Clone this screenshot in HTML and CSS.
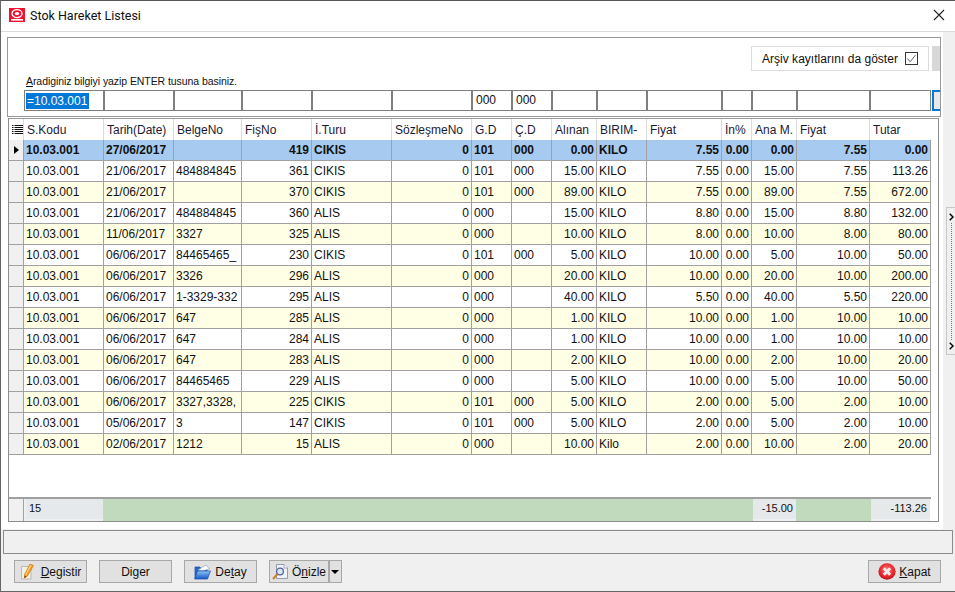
FILE: index.html
```html
<!DOCTYPE html>
<html lang="tr">
<head>
  <meta charset="UTF-8" />
  <title>Stok Hareket Listesi</title>
  <link rel="stylesheet" href="styles.css">
</head>
<body>
<div class="window">

  <div class="titlebar">
    <svg class="logo" width="16" height="14" viewBox="0 0 16 14">
      <rect width="16" height="14" fill="#f01030"/>
      <ellipse cx="8" cy="5.6" rx="5" ry="4" fill="none" stroke="#fff" stroke-width="1.4"/>
      <ellipse cx="8" cy="5.6" rx="2.2" ry="1.7" fill="#fff"/>
      <rect x="2" y="11" width="12" height="1.6" fill="#fff"/>
    </svg>
    <span class="title">Stok Hareket Listesi</span>
    <svg class="close" width="12" height="12" viewBox="0 0 12 12">
      <path d="M1 1L11 11M11 1L1 11" stroke="#222" stroke-width="1.1" fill="none"/>
    </svg>
  </div>

  <div class="body">
    <div class="main">
      <div class="filter">
        <div class="filter-top">
          <div class="archive"><span>Arşiv kayıtlarını da göster</span>
            <svg width="14" height="14" viewBox="0 0 14 14">
              <rect x="0.5" y="0.5" width="12" height="12" fill="#fff" stroke="#333"/>
              <path d="M2.5 6.5L5.2 9.8L10.5 3" fill="none" stroke="#666" stroke-width="1"/>
            </svg>
          </div>
          <div class="archive-side"></div>
        </div>
        <div class="hint"><u>A</u>radiginiz bilgiyi yazip ENTER tusuna basiniz.</div>
        <div class="inputs">
          <div class="inp w-kod"><span class="sel">=10.03.001</span></div>
          <div class="inp w-tar"></div>
          <div class="inp w-bel"></div>
          <div class="inp w-fis"></div>
          <div class="inp w-tur"></div>
          <div class="inp w-soz"></div>
          <div class="inp w-gd">000</div>
          <div class="inp w-cd">000</div>
          <div class="inp w-ali"></div>
          <div class="inp w-bir"></div>
          <div class="inp w-fi1"></div>
          <div class="inp w-ind"></div>
          <div class="inp w-ana"></div>
          <div class="inp w-fi2"></div>
          <div class="inp w-tut"></div>
          <div class="inp-btn"></div>
        </div>
      </div>

      <div class="grid">
        <div class="grid-scroll">
          <table>
            <colgroup>
              <col class="w-row"><col class="w-kod"><col class="w-tar"><col class="w-bel"><col class="w-fis">
              <col class="w-tur"><col class="w-soz"><col class="w-gd"><col class="w-cd"><col class="w-ali">
              <col class="w-bir"><col class="w-fi1"><col class="w-ind"><col class="w-ana"><col class="w-fi2"><col class="w-tut">
            </colgroup>
            <thead>
              <tr>
                <th class="ind"><svg width="11" height="10" viewBox="0 0 11 10"><path d="M0 .5H1.5M0 2.5H1.5M0 4.5H1.5M0 6.5H1.5M0 8.5H1.5M2.5 .5H11M2.5 2.5H11M2.5 4.5H11M2.5 6.5H11M2.5 8.5H11" stroke="#111" fill="none"/></svg></th>
                <th>S.Kodu</th><th>Tarih(Date)</th><th>BelgeNo</th><th>FişNo</th><th>İ.Turu</th><th>SözleşmeNo</th><th>G.D</th><th>Ç.D</th><th>Alınan</th><th>BIRIM-</th><th>Fiyat</th><th>İn%</th><th>Ana M.</th><th>Fiyat</th><th>Tutar</th>
              </tr>
            </thead>
            <tbody>
              <tr class="cur"><td class="ind"><i></i></td><td>10.03.001</td><td>27/06/2017</td><td></td><td class="n">419</td><td>CIKIS</td><td class="n">0</td><td>101</td><td>000</td><td class="n">0.00</td><td>KILO</td><td class="n">7.55</td><td class="n">0.00</td><td class="n">0.00</td><td class="n">7.55</td><td class="n">0.00</td></tr>
              <tr><td class="ind"></td><td>10.03.001</td><td>21/06/2017</td><td>484884845</td><td class="n">361</td><td>CIKIS</td><td class="n">0</td><td>101</td><td>000</td><td class="n">15.00</td><td>KILO</td><td class="n">7.55</td><td class="n">0.00</td><td class="n">15.00</td><td class="n">7.55</td><td class="n">113.26</td></tr>
              <tr class="alt"><td class="ind"></td><td>10.03.001</td><td>21/06/2017</td><td></td><td class="n">370</td><td>CIKIS</td><td class="n">0</td><td>101</td><td>000</td><td class="n">89.00</td><td>KILO</td><td class="n">7.55</td><td class="n">0.00</td><td class="n">89.00</td><td class="n">7.55</td><td class="n">672.00</td></tr>
              <tr><td class="ind"></td><td>10.03.001</td><td>21/06/2017</td><td>484884845</td><td class="n">360</td><td>ALIS</td><td class="n">0</td><td>000</td><td></td><td class="n">15.00</td><td>KILO</td><td class="n">8.80</td><td class="n">0.00</td><td class="n">15.00</td><td class="n">8.80</td><td class="n">132.00</td></tr>
              <tr class="alt"><td class="ind"></td><td>10.03.001</td><td>11/06/2017</td><td>3327</td><td class="n">325</td><td>ALIS</td><td class="n">0</td><td>000</td><td></td><td class="n">10.00</td><td>KILO</td><td class="n">8.00</td><td class="n">0.00</td><td class="n">10.00</td><td class="n">8.00</td><td class="n">80.00</td></tr>
              <tr><td class="ind"></td><td>10.03.001</td><td>06/06/2017</td><td>84465465_</td><td class="n">230</td><td>CIKIS</td><td class="n">0</td><td>101</td><td>000</td><td class="n">5.00</td><td>KILO</td><td class="n">10.00</td><td class="n">0.00</td><td class="n">5.00</td><td class="n">10.00</td><td class="n">50.00</td></tr>
              <tr class="alt"><td class="ind"></td><td>10.03.001</td><td>06/06/2017</td><td>3326</td><td class="n">296</td><td>ALIS</td><td class="n">0</td><td>000</td><td></td><td class="n">20.00</td><td>KILO</td><td class="n">10.00</td><td class="n">0.00</td><td class="n">20.00</td><td class="n">10.00</td><td class="n">200.00</td></tr>
              <tr><td class="ind"></td><td>10.03.001</td><td>06/06/2017</td><td>1-3329-332</td><td class="n">295</td><td>ALIS</td><td class="n">0</td><td>000</td><td></td><td class="n">40.00</td><td>KILO</td><td class="n">5.50</td><td class="n">0.00</td><td class="n">40.00</td><td class="n">5.50</td><td class="n">220.00</td></tr>
              <tr class="alt"><td class="ind"></td><td>10.03.001</td><td>06/06/2017</td><td>647</td><td class="n">285</td><td>ALIS</td><td class="n">0</td><td>000</td><td></td><td class="n">1.00</td><td>KILO</td><td class="n">10.00</td><td class="n">0.00</td><td class="n">1.00</td><td class="n">10.00</td><td class="n">10.00</td></tr>
              <tr><td class="ind"></td><td>10.03.001</td><td>06/06/2017</td><td>647</td><td class="n">284</td><td>ALIS</td><td class="n">0</td><td>000</td><td></td><td class="n">1.00</td><td>KILO</td><td class="n">10.00</td><td class="n">0.00</td><td class="n">1.00</td><td class="n">10.00</td><td class="n">10.00</td></tr>
              <tr class="alt"><td class="ind"></td><td>10.03.001</td><td>06/06/2017</td><td>647</td><td class="n">283</td><td>ALIS</td><td class="n">0</td><td>000</td><td></td><td class="n">2.00</td><td>KILO</td><td class="n">10.00</td><td class="n">0.00</td><td class="n">2.00</td><td class="n">10.00</td><td class="n">20.00</td></tr>
              <tr><td class="ind"></td><td>10.03.001</td><td>06/06/2017</td><td>84465465</td><td class="n">229</td><td>ALIS</td><td class="n">0</td><td>000</td><td></td><td class="n">5.00</td><td>KILO</td><td class="n">10.00</td><td class="n">0.00</td><td class="n">5.00</td><td class="n">10.00</td><td class="n">50.00</td></tr>
              <tr class="alt"><td class="ind"></td><td>10.03.001</td><td>06/06/2017</td><td>3327,3328,</td><td class="n">225</td><td>CIKIS</td><td class="n">0</td><td>101</td><td>000</td><td class="n">5.00</td><td>KILO</td><td class="n">2.00</td><td class="n">0.00</td><td class="n">5.00</td><td class="n">2.00</td><td class="n">10.00</td></tr>
              <tr><td class="ind"></td><td>10.03.001</td><td>05/06/2017</td><td>3</td><td class="n">147</td><td>CIKIS</td><td class="n">0</td><td>101</td><td>000</td><td class="n">5.00</td><td>KILO</td><td class="n">2.00</td><td class="n">0.00</td><td class="n">5.00</td><td class="n">2.00</td><td class="n">10.00</td></tr>
              <tr class="alt"><td class="ind"></td><td>10.03.001</td><td>02/06/2017</td><td>1212</td><td class="n">15</td><td>ALIS</td><td class="n">0</td><td>000</td><td></td><td class="n">10.00</td><td>Kilo</td><td class="n">2.00</td><td class="n">0.00</td><td class="n">10.00</td><td class="n">2.00</td><td class="n">20.00</td></tr>
            </tbody>
          </table>
        </div>
        <div class="totals">
          <div class="t-ind"></div>
          <div class="t-cell t-count">15</div>
          <div class="t-fill t-fill-a"></div>
          <div class="t-cell t-ana">-15.00</div>
          <div class="t-fill t-fill-b"></div>
          <div class="t-cell t-tut">-113.26</div>
        </div>
      </div>
    </div>

    <div class="side">
      <div class="splitter">
        <svg width="5" height="8" viewBox="0 0 5 8"><path d="M.7 .7L4 4L.7 7.3" fill="none" stroke="#000" stroke-width="1.4"/></svg>
        <span class="dots"></span>
        <svg width="5" height="8" viewBox="0 0 5 8"><path d="M.7 .7L4 4L.7 7.3" fill="none" stroke="#000" stroke-width="1.4"/></svg>
      </div>
    </div>
  </div>

  <div class="status"></div>

  <div class="buttons">
    <button class="btn">
      <svg class="ico-edit" width="15" height="16" viewBox="0 0 15 16">
        <path d="M1.5 2.5H11V15H1.5Z" fill="#f3f0e6" stroke="#bdb9ad"/>
        <path d="M10 0L13.5 1.5L7.5 12L4.5 14L4.5 10.5Z" fill="#f39a1c" stroke="#c9700f" stroke-width="0.6"/>
        <path d="M10 1L11.5 1.6L6 11.5L5 11Z" fill="#fcd27a"/>
        <path d="M4.5 11.5L6.5 12.7L4.5 14Z" fill="#5c3c20"/>
      </svg>
      <span><u>D</u>egistir</span>
    </button>
    <button class="btn"><span>Di<u>g</u>er</span></button>
    <button class="btn">
      <svg width="17" height="16" viewBox="0 0 17 16">
        <defs>
          <linearGradient id="fold" x1="0" y1="0" x2="0" y2="1">
            <stop offset="0" stop-color="#8cc4f6"/>
            <stop offset="1" stop-color="#1558c8"/>
          </linearGradient>
        </defs>
        <path d="M1 3H6L7 5H13V14H1Z" fill="#2a66c8" stroke="#1b4fa8" stroke-width="0.7"/>
        <path d="M4 6L12 1L15.5 5L8 7Z" fill="#fff" stroke="#7f9cc0" stroke-width="0.6"/>
        <path d="M.6 15L3.5 7H16.5L13.5 15Z" fill="url(#fold)" stroke="#1b4fa8" stroke-width="0.7"/>
      </svg>
      <span>De<u>t</u>ay</span>
    </button>
    <div class="split">
      <button class="btn btn-onizle">
        <svg width="17" height="16" viewBox="0 0 17 16">
          <path d="M4.5 .5H12L15.5 4V14.5H4.5Z" fill="#eef2fa" stroke="#8c92ac" stroke-width="0.9"/>
          <path d="M12 .5V4H15.5" fill="#fff" stroke="#8c92ac" stroke-width="0.8"/>
          <circle cx="8" cy="7.5" r="3.4" fill="#d4e6f8" stroke="#56658c" stroke-width="1.3"/>
          <path d="M5.5 10L1 15" stroke="#cf7f22" stroke-width="2"/>
        </svg>
        <span>Ö<u>n</u>izle</span>
      </button>
      <button class="btn btn-drop"><i></i></button>
    </div>
    <button class="btn btn-kapat">
      <svg width="18" height="17" viewBox="0 0 18 17">
        <defs>
          <radialGradient id="red" cx="0.5" cy="0.4" r="0.6">
            <stop offset="0" stop-color="#f77"/>
            <stop offset="0.7" stop-color="#e8242c"/>
            <stop offset="1" stop-color="#b5141c"/>
          </radialGradient>
        </defs>
        <ellipse cx="9" cy="8.5" rx="8.6" ry="8.2" fill="url(#red)"/>
        <path d="M5.8 5.3L12.2 11.7M12.2 5.3L5.8 11.7" stroke="#f4e8e8" stroke-width="3"/>
      </svg>
      <span><u>K</u>apat</span>
    </button>
  </div>
</div>
</body>
</html>
```

FILE: styles.css
```css
* { box-sizing: border-box; }
html, body { margin: 0; padding: 0; }
body {
  width: 955px; height: 592px; overflow: hidden;
  font-family: "Liberation Sans", Arial, sans-serif;
  font-size: 12px;
  color: #111;
  background: #f0f0f0;
}
.window {
  width: 955px; height: 592px;
  border-top: 1px solid #555;
  border-left: 1px solid #666;
  border-bottom: 1px solid #666;
  display: flex; flex-direction: column;
  background: #f0f0f0;
}

/* title */
.titlebar {
  height: 31px; flex: none;
  background: #fff;
  display: flex; align-items: center;
  padding: 0 10px 2px 8px;
  border-bottom: 1px solid #dcdcdc;
}
.title { margin-left: 5px; font-family: Roboto, sans-serif; font-size: 12.5px; color: #111; }
.close { margin-left: auto; }

.body { height: 498px; flex: none; display: flex; }
.main { width: 942px; height: 497px; flex: none; padding: 5px 0 0 6px; background: #fff; }

/* filter panel */
.filter {
  width: 934px; height: 80px;
  background: #fff;
  border: 1px solid #999;
  display: flex; flex-direction: column;
  padding-left: 16px;
}
.filter-top { height: 26px; margin-top: 8px; display: flex; justify-content: flex-end; }
.archive {
  width: 178px; height: 25px; margin-right: 2px;
  border: 1px solid #dcdcdc;
  display: flex; align-items: center;
  padding-left: 10px; gap: 7px;
  font-size: 12px; white-space: nowrap;
}
.archive span { letter-spacing: 0.02px; }
.archive-side { width: 8px; height: 25px; margin-left: 1px; background: #d8d8d8; }
.hint { margin: 3px 0 0 2px; height: 14px; font-size: 10.5px; line-height: 13px; letter-spacing: -0.07px; }
.inputs { display: flex; height: 21px; margin-top: 1px; }
.inp {
  height: 21px; border: 1px solid #7f7f7f;
  font-size: 12px; line-height: 19px; padding-left: 3px; background: #fff;
  display: flex; align-items: center;
}
.sel { background: #0078d7; color: #fff; height: 16px; line-height: 16px; padding-left: 1px; width: 63px; margin-left: -2px; }
.inp-btn { width: 8px; height: 21px; margin-left: 1px; border: 2px solid #0078d7; border-right: 0; background: #e8e8e8; }

/* shared by the filter inputs and the grid columns */
.w-row { width: 15px; }
.w-kod { width: 80px; } .w-tar { width: 70px; } .w-bel { width: 68px; } .w-fis { width: 70px; }
.w-tur { width: 80px; } .w-soz { width: 80px; } .w-gd { width: 40px; } .w-cd { width: 40px; }
.w-ali { width: 45px; } .w-bir { width: 50px; } .w-fi1 { width: 75px; } .w-ind { width: 30px; }
.w-ana { width: 45px; } .w-fi2 { width: 73px; } .w-tut { width: 61px; }

/* grid */
.grid {
  width: 931px; height: 404px; margin-top: 1px; margin-left: 1px;
  border: 1px solid #8c8c8c;
  border-top-color: #999;
  background: #fff;
  display: flex; flex-direction: column;
}
.grid-scroll { height: 378px; flex: none; }
table { border-collapse: separate; border-spacing: 0; table-layout: fixed; width: 922px; }
th, td {
  height: 21px; overflow: hidden; white-space: nowrap;
  font-size: 12px; font-weight: normal; text-align: left;
  border-right: 1px solid #a0a0a0; border-bottom: 1px solid #a0a0a0;
}
th { border-bottom: 0; border-right-color: #dcdcdc; color: #1a1a33; padding: 0 3px; background: #fff; }
thead th:last-child { border-right: 0; }
td { padding: 0 2px; color: #111; }
.n { text-align: right; }
td.ind, th.ind { background: #f0f0f0; padding: 0; }
th.ind { background: #fff; }
th.ind svg { display: block; margin: 0 0 0 3px; }
tr.alt td { background: #ffffe6; }
tr.cur td { background: #a6caf0; font-weight: bold; }
tr.alt td.ind, tr.cur td.ind { background: #f0f0f0; }
td.ind i { display: block; margin-left: 5px; width: 0; height: 0; border-left: 5px solid #000; border-top: 4.5px solid transparent; border-bottom: 4.5px solid transparent; }

/* totals */
.totals {
  height: 24px; flex: none; width: 922px;
  display: flex;
  border-top: 2px solid #a0a0a0;
  font-size: 11px;
}
.t-ind { width: 15px; background: #f0f0f0; border-right: 1px solid #a0a0a0; }
.t-fill { background: #c1dabe; }
.t-fill-a { width: 650px; }
.t-fill-b { width: 75px; }
.t-cell { background: #e6e9eb; line-height: 19px; padding: 0 3px; border-bottom: 2px solid #eef0f0; }
.t-count { width: 79px; border-left: 2px solid #eef0f0; }
.t-ana { width: 43px; text-align: right; }
.t-tut { width: 59px; text-align: right; }

/* right strip */
.side { flex: 1; position: relative; }
.splitter {
  position: absolute; left: 3px; top: 175px;
  width: 9px; height: 148px;
  border: 1px solid #c8c8c8; border-right: 0;
  display: flex; flex-direction: column; align-items: center;
  padding: 5px 0 4px;
}
.dots { flex: 1; border-left: 1px dotted #2a8ae0; margin: 2px 0; }

/* status and buttons */
.status {
  height: 24px; flex: none; margin: 0 2px;
  border: 1px solid #8c8c8c;
  background: #f0f0f0;
}
.buttons {
  flex: 1; display: flex; align-items: flex-start;
  padding: 6px 0 0 13px; gap: 12px;
}
.btn {
  width: 73px; height: 23px; padding: 0;
  border: 1px solid #a8a8a8;
  background: #e1e1e1;
  font-family: "Liberation Sans", Arial, sans-serif;
  font-size: 12px; color: #111;
  display: flex; align-items: center; justify-content: center; gap: 4px;
}
.ico-edit { margin-right: 2px; }
.split { display: flex; }
.btn-onizle { width: 60px; gap: 3px; }
.btn-drop { width: 13px; border-left: 0; box-shadow: inset 1px 0 0 #a8a8a8; }
.btn-drop i { width: 0; height: 0; border-left: 4px solid transparent; border-right: 4px solid transparent; border-top: 4px solid #000; }
.btn-kapat { margin-left: auto; margin-right: 14px; gap: 3px; }
```
